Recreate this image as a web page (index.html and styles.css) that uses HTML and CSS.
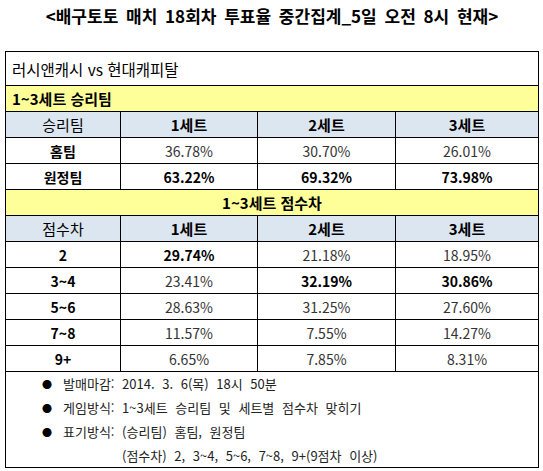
FILE: index.html
```html
<!DOCTYPE html>
<html lang="ko">
  <head>
    <meta charset="utf-8">
    <title>배구토토 매치 18회차 투표율</title>
    <link rel="stylesheet" href="styles.css">
  </head>
  <body>
    <div class="wrapper">
      <h1 class="title">&lt;배구토토 매치 18회차 투표율 중간집계_5일 오전 8시 현재&gt;</h1>
      <table class="vote">
        <colgroup>
          <col class="c1"><col class="c2"><col class="c3"><col class="c4">
        </colgroup>
        <tr class="match">
          <td colspan="4">러시앤캐시 vs 현대캐피탈</td>
        </tr>
        <tr class="section">
          <td colspan="4" class="left">1~3세트 승리팀</td>
        </tr>
        <tr class="head">
          <td>승리팀</td><td class="b">1세트</td><td class="b">2세트</td><td class="b">3세트</td>
        </tr>
        <tr>
          <td class="b">홈팀</td><td>36.78%</td><td>30.70%</td><td>26.01%</td>
        </tr>
        <tr>
          <td class="b">원정팀</td><td class="b">63.22%</td><td class="b">69.32%</td><td class="b">73.98%</td>
        </tr>
        <tr class="section">
          <td colspan="4">1~3세트 점수차</td>
        </tr>
        <tr class="head">
          <td>점수차</td><td class="b">1세트</td><td class="b">2세트</td><td class="b">3세트</td>
        </tr>
        <tr>
          <td class="b">2</td><td class="b">29.74%</td><td>21.18%</td><td>18.95%</td>
        </tr>
        <tr>
          <td class="b">3~4</td><td>23.41%</td><td class="b">32.19%</td><td class="b">30.86%</td>
        </tr>
        <tr>
          <td class="b">5~6</td><td>28.63%</td><td>31.25%</td><td>27.60%</td>
        </tr>
        <tr>
          <td class="b">7~8</td><td>11.57%</td><td>7.55%</td><td>14.27%</td>
        </tr>
        <tr>
          <td class="b">9+</td><td>6.65%</td><td>7.85%</td><td>8.31%</td>
        </tr>
        <tr class="notes">
          <td colspan="4">
            <ul>
              <li><span class="dot">●</span>발매마감: 2014. 3. 6(목) 18시 50분</li>
              <li><span class="dot">●</span>게임방식: 1~3세트 승리팀 및 세트별 점수차 맞히기</li>
              <li><span class="dot">●</span>표기방식: (승리팀) 홈팀, 원정팀</li>
              <li class="sub">(점수차) 2, 3~4, 5~6, 7~8, 9+(9점차 이상)</li>
            </ul>
          </td>
        </tr>
      </table>
    </div>
  </body>
</html>
```

FILE: styles.css
```css
* {
margin: 0;
padding: 0;
box-sizing: border-box;
font-family: "Noto Sans CJK KR", "Noto Sans", sans-serif;
}

body {
background: #fff;
color: #000;
}

.wrapper {
padding: 4px 4px 0 5px;
}

.title {
font-size: 17px;
font-weight: bold;
line-height: 24px;
text-align: center;
word-spacing: 3px;
margin-bottom: 23px;
}

.vote {
width: 534px;
border-collapse: collapse;
table-layout: fixed;
border: 1px solid #000;
}

.vote col.c1 { width: 115px; }
.vote col.c2 { width: 137px; }
.vote col.c3 { width: 138px; }
.vote col.c4 { width: 143px; }

.vote td {
height: 26px;
border: 1px solid #000;
text-align: center;
font-size: 14px;
line-height: 20px;
color: #333;
padding: 0;
}

.vote td.b {
font-weight: bold;
color: #000;
}

.vote .match td {
height: 34px;
text-align: left;
padding-left: 6px;
font-size: 15.5px;
color: #000;
}

.vote .section td {
background: #ffff99;
font-weight: bold;
font-size: 15px;
color: #000;
}

.vote .section td.left {
text-align: left;
padding-left: 6px;
}

.vote .head td {
background: #dce6f1;
font-size: 15px;
color: #000;
}

.vote .notes td {
text-align: left;
padding: 0 0 0 36px;
}

.notes ul {
list-style: none;
}

.notes li {
font-size: 13px;
line-height: 23px;
color: #222;
word-spacing: 4px;
}

.notes .dot {
display: inline-block;
width: 21px;
font-size: 10px;
color: #000;
}

.notes .sub {
padding-left: 80px;
}
```
